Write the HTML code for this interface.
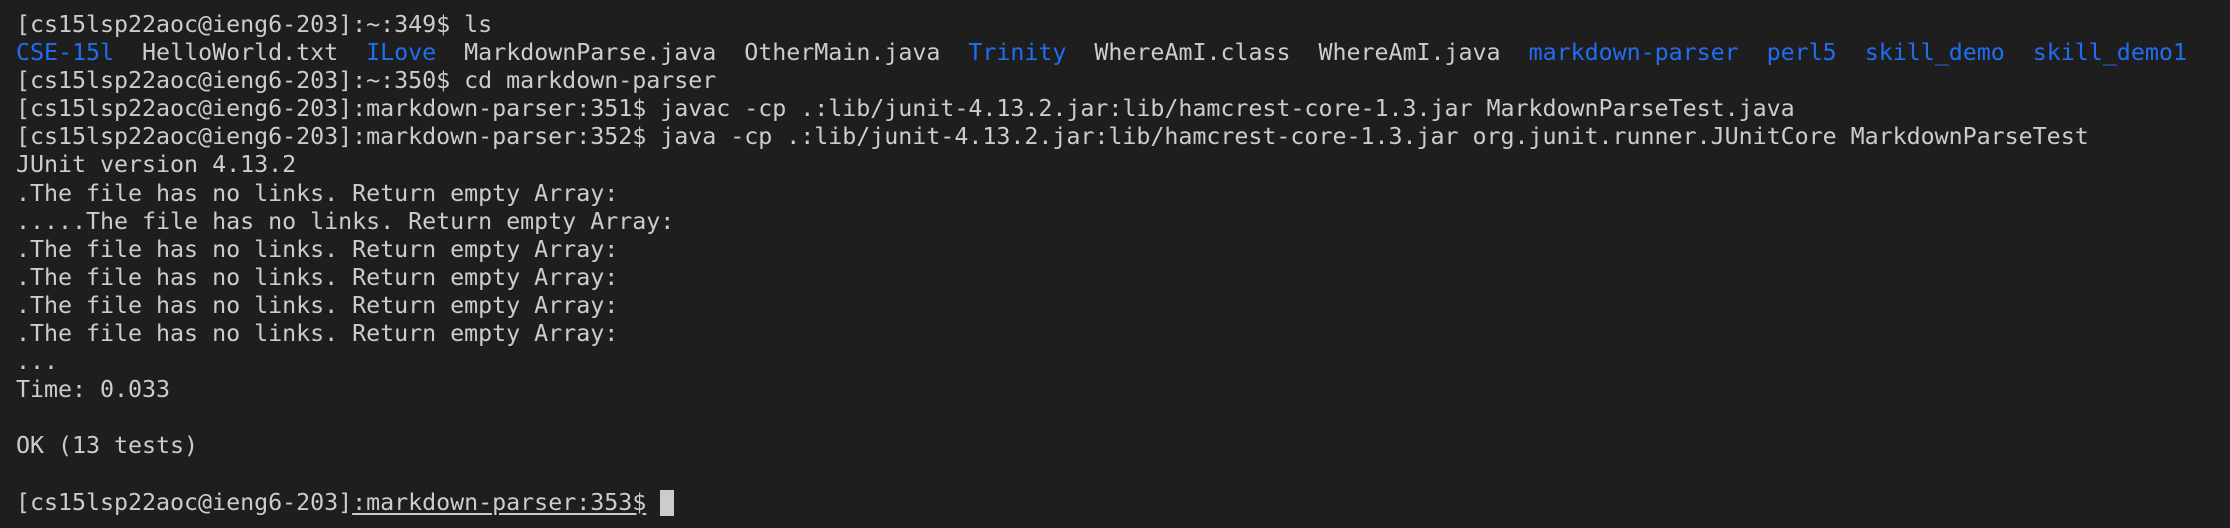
<!DOCTYPE html>
<html><head><meta charset="utf-8"><style>
html,body{margin:0;padding:0;background:#1e1e1e;}
body{width:2230px;height:528px;overflow:hidden;}
pre{margin:0;position:absolute;left:16px;top:10px;font-family:"DejaVu Sans Mono","Liberation Mono",monospace;font-size:23.33px;line-height:28.1px;color:#cccccc;letter-spacing:-0.04px;}
.b{color:#1f6ef2;}
.u{text-decoration:underline;text-underline-offset:3px;}
.c{display:inline-block;width:14px;height:26px;background:#cccccc;vertical-align:-6px;}
</style></head><body>
<pre>[cs15lsp22aoc@ieng6-203]:~:349$ ls
<span class="b">CSE-15l</span>  HelloWorld.txt  <span class="b">ILove</span>  MarkdownParse.java  OtherMain.java  <span class="b">Trinity</span>  WhereAmI.class  WhereAmI.java  <span class="b">markdown-parser</span>  <span class="b">perl5</span>  <span class="b">skill_demo</span>  <span class="b">skill_demo1</span>
[cs15lsp22aoc@ieng6-203]:~:350$ cd markdown-parser
[cs15lsp22aoc@ieng6-203]:markdown-parser:351$ javac -cp .:lib/junit-4.13.2.jar:lib/hamcrest-core-1.3.jar MarkdownParseTest.java
[cs15lsp22aoc@ieng6-203]:markdown-parser:352$ java -cp .:lib/junit-4.13.2.jar:lib/hamcrest-core-1.3.jar org.junit.runner.JUnitCore MarkdownParseTest
JUnit version 4.13.2
.The file has no links. Return empty Array:
.....The file has no links. Return empty Array:
.The file has no links. Return empty Array:
.The file has no links. Return empty Array:
.The file has no links. Return empty Array:
.The file has no links. Return empty Array:
...
Time: 0.033

OK (13 tests)

[cs15lsp22aoc@ieng6-203]<span class="u">:markdown-parser:353$</span> <span class="c"></span></pre>
</body></html>
